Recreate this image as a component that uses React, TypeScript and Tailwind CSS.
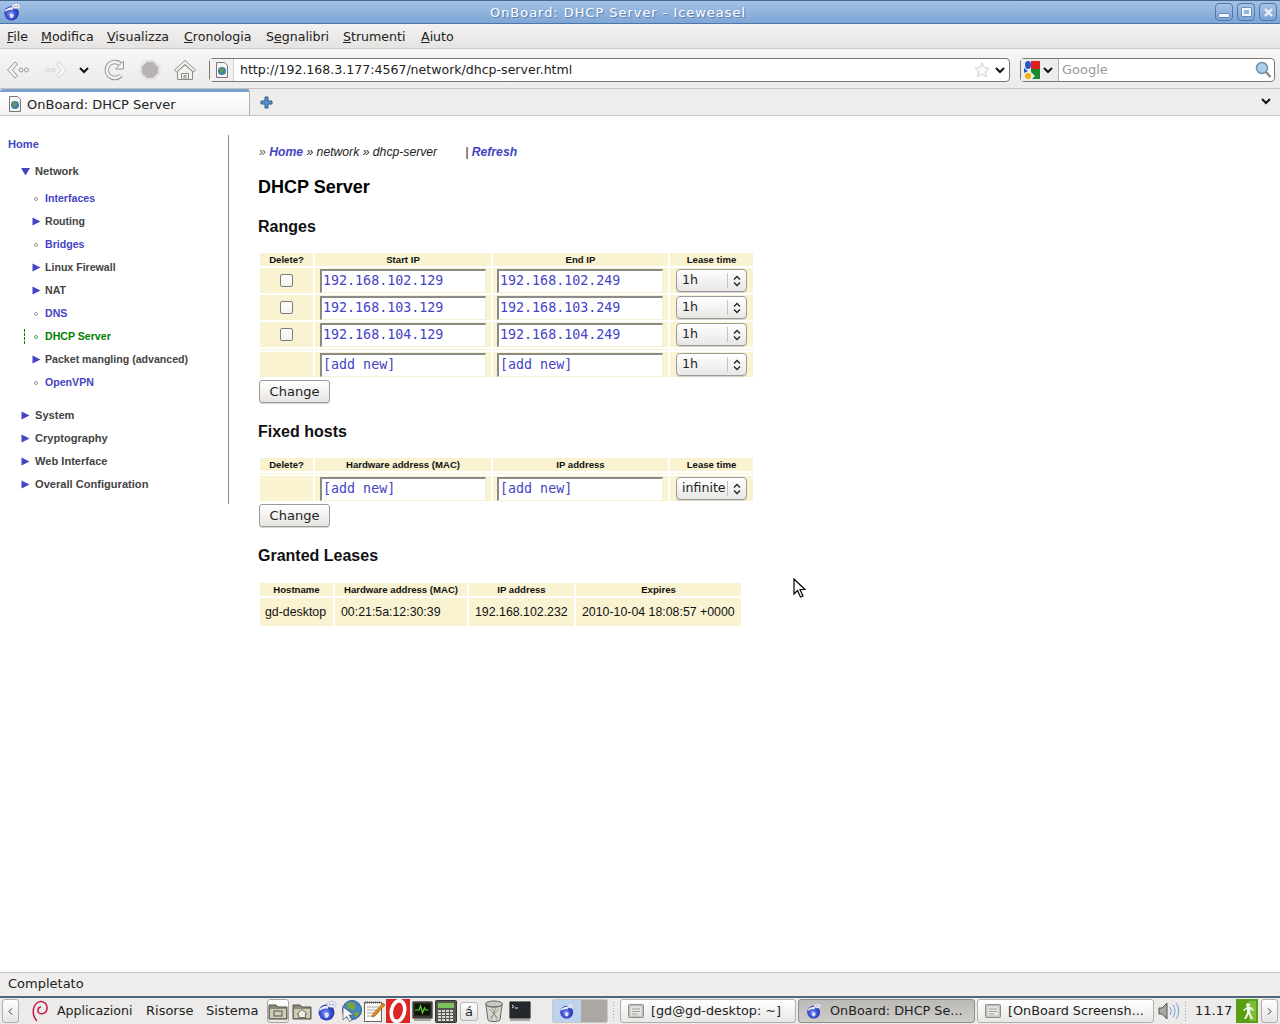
const Chevron = ({ className = "" }: { className?: string }) => (
  <svg className={className} width="12" height="8" viewBox="0 0 12 8" fill="none">
    <path d="M2 2l4 4 4-4" stroke="#111" strokeWidth="2" />
  </svg>
)

const Favicon = () => (
  <svg width="14" height="16" viewBox="0 0 14 16">
    <path d="M1.5.5h8l3 3v12h-11z" fill="#f4f4f2" stroke="#777" />
    <circle cx="7" cy="9" r="4" fill="#3f7fa8" />
    <path d="M5 7l3-1 1 2-2 3-2-2z" fill="#6d9a45" />
  </svg>
)

const Weasel = ({ size = 20 }: { size?: number }) => (
  <svg width={size} height={size} viewBox="0 0 20 20">
    <defs>
      <radialGradient id="weaselGlobe" cx="45%" cy="55%" r="60%">
        <stop offset="0" stopColor="#8f9ff0" />
        <stop offset="0.55" stopColor="#3a4fd4" />
        <stop offset="1" stopColor="#1c2a9a" />
      </radialGradient>
    </defs>
    <circle cx="9.5" cy="11.500" r="8" fill="url(#weaselGlobe)" />
    <path d="M2.500 8c3-3 6-4 9-3l-1 3c-3-1-5 0-8 2z" fill="#eef0fa" />
    <ellipse cx="14.500" cy="3.500" rx="4.500" ry="3" fill="#eef0fa" stroke="#8a94c8" strokeWidth="0.5" />
    <circle cx="13" cy="3.500" r="0.700" fill="#667" />
    <circle cx="16" cy="3.500" r="0.700" fill="#667" />
    <path d="M8 12c2-1 4 0 4 2s-2 3-3 3-2-3-1-5z" fill="#dfe3fa" />
  </svg>
)

const Triangle = ({ down = false }: { down?: boolean }) => (
  <svg width="9" height="9" viewBox="0 0 9 9" className="shrink-0">
    <path d={down ? "M0 1h9L4.5 8.5z" : "M0.5 0.5L8.5 4.5 0.5 8.5z"} fill="#4444c4" />
  </svg>
)

const Bullet = ({ green = false }: { green?: boolean }) => (
  <span className={`block h-[4px] w-[4px] shrink-0 rounded-full border ${green ? "border-[#5aa85a]" : "border-[#9a9a9a]"}`} />
)

const subItems: { label: string; kind: "link" | "folder" | "active" }[] = [
  { label: "Interfaces", kind: "link" },
  { label: "Routing", kind: "folder" },
  { label: "Bridges", kind: "link" },
  { label: "Linux Firewall", kind: "folder" },
  { label: "NAT", kind: "folder" },
  { label: "DNS", kind: "link" },
  { label: "DHCP Server", kind: "active" },
  { label: "Packet mangling (advanced)", kind: "folder" },
  { label: "OpenVPN", kind: "link" },
]

const Sidebar = () => (
  <nav className="mt-[19px] h-[369px] w-[229px] shrink-0 border-r border-[#8a8a8a] text-[11.1px] font-bold text-[#444444]">
    <div className="flex h-[19px] items-center pl-[8px] text-[#4444c4]">Home</div>
    <div className="mt-[6px] flex h-[23px] items-center gap-[5px] pl-[21px]">
      <Triangle down />
      <span>Network</span>
    </div>
    <div className="mt-[4px] text-[10.6px]">
      {subItems.map((item) => (
        <div key={item.label} className="relative flex h-[23px] items-center">
          {item.kind === "active" && <span className="absolute left-[24px] top-[4px] h-[15px] border-l border-dashed border-[#008000]" />}
          {item.kind === "folder" ? (
            <span className="ml-[32px] mr-[4px] flex w-[9px]"><Triangle /></span>
          ) : (
            <span className="ml-[34px] mr-[7px] flex w-[4px]"><Bullet green={item.kind === "active"} /></span>
          )}
          <span className={item.kind === "link" ? "text-[#4444c4]" : item.kind === "active" ? "text-[#008000]" : ""}>{item.label}</span>
        </div>
      ))}
    </div>
    <div className="mt-[10px]">
      {["System", "Cryptography", "Web Interface", "Overall Configuration"].map((label) => (
        <div key={label} className="flex h-[23px] items-center gap-[5px] pl-[21px]">
          <Triangle />
          <span>{label}</span>
        </div>
      ))}
    </div>
  </nav>
)

const TextBox = ({ value }: { value: string }) => (
  <input
    readOnly
    value={value}
    className="block h-[24px] w-[166px] border-2 border-b border-r border-[#8a8a86] border-b-[#f6f0d2] border-r-[#f6f0d2] bg-white pb-[2px] pl-[1px] font-['DejaVu_Sans_Mono',monospace] text-[13.33px] text-[#4444c4] outline-none"
  />
)

const Select = ({ value }: { value: string }) => (
  <div className="flex h-[23px] w-[71px] items-center rounded-[4px] border border-[#9a9a96] bg-gradient-to-b from-white to-[#e8e7e5] font-['DejaVu_Sans',sans-serif] text-[12.6px] text-[#222222] shadow-[0_1px_0_#d4d2c8]">
    <span className="w-[50px] shrink-0 whitespace-nowrap pl-[5px]">{value}</span>
    <span className="flex h-[15px] w-[19px] items-center justify-center border-l border-[#c4c3c0]">
      <svg width="8" height="12" viewBox="0 0 8 12" fill="none">
        <path d="M1 4.5l3-3 3 3M1 7.5l3 3 3-3" stroke="#222" strokeWidth="1.3" />
      </svg>
    </span>
  </div>
)

const CheckBox = () => (
  <span className="mx-auto block h-[13px] w-[13px] rounded-[2px] border border-[#7d7d7a] bg-gradient-to-b from-white to-[#f2f2f0]" />
)

const ChangeButton = () => (
  <button className="ml-[1px] mt-[1px] block h-[23px] w-[71px] rounded-[3px] border border-[#9a9a96] bg-gradient-to-b from-white to-[#e6e5e2] font-['DejaVu_Sans',sans-serif] text-[13px] text-[#222222] shadow-[0_1px_0_#d8d8d4]">
    Change
  </button>
)

const tableClass = "table-fixed border-separate border-spacing-[2px] bg-white"
const thClass = "h-[13px] bg-[#faf3d2] p-0 text-center text-[9.6px] font-bold leading-[13px] text-[#111111]"
const tdClass = "h-[25px] bg-[#faf3d2] p-0 align-top"
const startCell = "h-[25px] bg-[#faf3d2] p-0 pl-[5px] pt-[1px] align-top"
const endCell = "h-[25px] bg-[#faf3d2] p-0 pl-[4px] pt-[1px] align-top"
const selectCell = "h-[25px] bg-[#faf3d2] p-0 pl-[6px] pt-[1px] align-top"

const Spacer = () => (
  <tr>
    {[0, 1, 2, 3].map((i) => (
      <td key={i} className="h-[1px] bg-[#faf3d2] p-0 text-[0px] leading-[0]"></td>
    ))}
  </tr>
)

const ranges = [
  ["192.168.102.129", "192.168.102.249"],
  ["192.168.103.129", "192.168.103.249"],
  ["192.168.104.129", "192.168.104.249"],
]

const Cols = () => (
  <colgroup>
    <col className="w-[53px]" />
    <col className="w-[176px]" />
    <col className="w-[175px]" />
    <col className="w-[83px]" />
  </colgroup>
)

const RangesTable = () => (
  <table className={`${tableClass} mt-[15px] w-[497px]`}>
    <Cols />
    <tbody>
      <tr>
        <th className={thClass}>Delete?</th>
        <th className={thClass}>Start IP</th>
        <th className={thClass}>End IP</th>
        <th className={thClass}>Lease time</th>
      </tr>
      {ranges.map((row) => (
        <tr key={row[0]}>
          <td className={`${tdClass} pt-[6px]`}><CheckBox /></td>
          <td className={startCell}><TextBox value={row[0]} /></td>
          <td className={endCell}><TextBox value={row[1]} /></td>
          <td className={selectCell}><Select value="1h" /></td>
        </tr>
      ))}
      <Spacer />
      <tr>
        <td className={tdClass}></td>
        <td className={startCell}><TextBox value="[add new]" /></td>
        <td className={endCell}><TextBox value="[add new]" /></td>
        <td className={selectCell}><Select value="1h" /></td>
      </tr>
    </tbody>
  </table>
)

const FixedTable = () => (
  <table className={`${tableClass} mt-[15px] w-[497px]`}>
    <Cols />
    <tbody>
      <tr>
        <th className={thClass}>Delete?</th>
        <th className={thClass}>Hardware address (MAC)</th>
        <th className={thClass}>IP address</th>
        <th className={thClass}>Lease time</th>
      </tr>
      <Spacer />
      <tr>
        <td className={tdClass}></td>
        <td className={startCell}><TextBox value="[add new]" /></td>
        <td className={endCell}><TextBox value="[add new]" /></td>
        <td className={selectCell}><Select value="infinite" /></td>
      </tr>
    </tbody>
  </table>
)

const leaseCell = "h-[28px] whitespace-nowrap bg-[#faf3d2] p-0 pl-[6px] pt-[1px] text-[12.35px] text-[#111111]"

const LeasesTable = () => (
  <table className={`${tableClass} mt-[16px] w-[485px]`}>
    <colgroup>
      <col className="w-[73px]" />
      <col className="w-[132px]" />
      <col className="w-[105px]" />
      <col className="w-[165px]" />
    </colgroup>
    <tbody>
      <tr>
        <th className={thClass}>Hostname</th>
        <th className={thClass}>Hardware address (MAC)</th>
        <th className={thClass}>IP address</th>
        <th className={thClass}>Expires</th>
      </tr>
      <tr>
        <td className={leaseCell}><span className="-ml-[1px]">gd-desktop</span></td>
        <td className={leaseCell}>00:21:5a:12:30:39</td>
        <td className={leaseCell}>192.168.102.232</td>
        <td className={leaseCell}>2010-10-04 18:08:57 +0000</td>
      </tr>
    </tbody>
  </table>
)

const SectionTitle = ({ children }: { children: string }) => (
  <h2 className="mt-[18px] flex h-[20px] items-center pt-[1px] text-[16px] font-bold text-[#111111]">{children}</h2>
)

const PageBody = () => (
  <main className="ml-[29px] flex-1">
    <div className="mt-[28px] flex h-[16px] items-center whitespace-pre pl-[1px] text-[12.2px] italic text-[#222222]">
      <span className="text-[#555555]">» </span>
      <span className="font-bold text-[#4444c4]">Home</span>
      <span> » network » dhcp-server</span>
      <span className="ml-[28px]">| </span>
      <span className="font-bold text-[#4444c4]">Refresh</span>
    </div>
    <h1 className="mt-[17px] flex h-[20px] items-center text-[18px] font-bold text-black">DHCP Server</h1>
    <h2 className="mt-[19px] flex h-[20px] items-center pt-[1px] text-[16px] font-bold text-[#111111]">Ranges</h2>
    <RangesTable />
    <ChangeButton />
    <SectionTitle>Fixed hosts</SectionTitle>
    <FixedTable />
    <ChangeButton />
    <SectionTitle>Granted Leases</SectionTitle>
    <LeasesTable />
  </main>
)

const WindowButton = ({ children }: { children: React.ReactNode }) => (
  <span className="flex h-[18px] w-[18px] items-center justify-center rounded-[4px] border border-[#4f78ad] bg-gradient-to-b from-[#a9c4e6] to-[#7da3d3]">
    {children}
  </span>
)

const TitleBar = () => (
  <header className="relative flex h-[24px] items-center border-t border-b border-t-[#47678f] border-b-[#4f76a8] bg-gradient-to-b from-[#a3c1e4] to-[#7ea6d6]">
    <span className="ml-[3px] flex"><Weasel size={18} /></span>
    <span className="flex-1 pt-[2px] text-center text-[13px] tracking-[0.95px] text-white [text-shadow:1px_1px_0_#5b7fae]">OnBoard: DHCP Server - Iceweasel</span>
    <div className="mr-[3px] flex gap-[4px]">
      <WindowButton><span className="mt-[7px] block h-[3px] w-[10px] bg-[#eef3fa] shadow-[0_0_0_0.5px_#456a9c]" /></WindowButton>
      <WindowButton><span className="block h-[8px] w-[9px] border-2 border-[#eef3fa] shadow-[0_0_0_0.5px_#456a9c]" /></WindowButton>
      <WindowButton>
        <svg width="11" height="11" viewBox="0 0 11 11"><path d="M2 2l7 7M9 2l-7 7" stroke="#eef3fa" strokeWidth="2.4" /></svg>
      </WindowButton>
    </div>
  </header>
)

const menus: { pre: string; key: string; rest: string; w: string }[] = [
  { pre: "", key: "F", rest: "ile", w: "w-[20px]" },
  { pre: "", key: "M", rest: "odifica", w: "w-[52px]" },
  { pre: "", key: "V", rest: "isualizza", w: "w-[63px]" },
  { pre: "", key: "C", rest: "ronologia", w: "w-[68px]" },
  { pre: "S", key: "e", rest: "gnalibri", w: "w-[63px]" },
  { pre: "", key: "S", rest: "trumenti", w: "w-[64px]" },
  { pre: "", key: "A", rest: "iuto", w: "w-[33px]" },
]

const MenuBar = () => (
  <div className="flex h-[25px] items-center gap-[14px] border-b border-[#c9c8c6] bg-gradient-to-b from-[#f3f2f0] to-[#e5e4e2] pl-[7px] pt-[2px] text-[12.6px] text-[#222222]">
    {menus.map((m) => (
      <span key={m.rest} className={`${m.w} whitespace-nowrap`}>{m.pre}<span className="underline">{m.key}</span>{m.rest}</span>
    ))}
  </div>
)

const NavToolbar = () => (
  <div className="flex h-[39px] items-center bg-gradient-to-b from-[#f6f6f4] to-[#ecebe9] pl-[6px] pt-[2px]">
    <svg width="24" height="24" viewBox="0 0 24 24" fill="#f2f1ef" stroke="#999896">
      <path d="M1.5 12L9 4l2.5 2L6.5 12l5 6L9 20z" />
      <circle cx="15" cy="12" r="2" fill="none" />
      <circle cx="20.5" cy="12" r="2" fill="none" />
    </svg>
    <svg className="ml-[14px]" width="24" height="24" viewBox="0 0 24 24" fill="#f7f6f4" stroke="#d4d3d1">
      <path d="M22.5 12L15 4l-2.5 2 5 6-5 6 2.5 2z" />
      <circle cx="9" cy="12" r="2" fill="none" />
      <circle cx="3.5" cy="12" r="2" fill="none" />
    </svg>
    <Chevron className="ml-[10px]" />
    <svg className="ml-[13px]" width="24" height="24" viewBox="0 0 24 24" fill="none">
      <path d="M18 17a8 8 0 1 1 0-10" stroke="#999896" strokeWidth="4.4" />
      <path d="M18 17a8 8 0 1 1 0-10" stroke="#f4f3f1" strokeWidth="2.6" />
      <path d="M20.5 3v8h-8z" fill="#f4f3f1" stroke="#999896" />
    </svg>
    <svg className="ml-[11px]" width="24" height="24" viewBox="0 0 24 24">
      <path d="M8 1.500h8l6.500 6.500v8L16 22.500H8L1.500 16V8z" fill="#e4e3e1" />
      <path d="M9 4h6l5 5v6l-5 5H9l-5-5V9z" fill="#b8b2b2" />
    </svg>
    <svg className="ml-[11px]" width="24" height="24" viewBox="0 0 24 24" fill="#f4f3f1" stroke="#8c8b88">
      <path d="M12 2.500L1.500 12l2 2L12 6.500 20.500 14l2-2z" />
      <path d="M4.500 13.500v8h15v-8L12 7z" />
      <path d="M8.500 21.500v-6h7v6M11 21.500v-4h2v4" fill="none" />
    </svg>
    <div className="ml-[12px] flex h-[24px] w-[801px] items-center rounded-[4px] border border-[#777774] bg-white">
      <span className="flex h-full w-[24px] items-center justify-center border-r border-[#d0cfcc] bg-[#f2f1ef]"><Favicon /></span>
      <span className="ml-[6px] flex-1 pt-[2px] text-[12.55px] text-[#222222]">http://192.168.3.177:4567/network/dhcp-server.html</span>
      <svg width="16" height="16" viewBox="0 0 16 16" fill="#fafafa" stroke="#d0d0ce">
        <path d="M8 .8l2.200 4.800 5 .6-3.700 3.500 1 5.200L8 12.300l-4.500 2.600 1-5.200L.8 6.200l5-.6z" />
      </svg>
      <Chevron className="ml-[4px] mr-[3px]" />
    </div>
    <div className="ml-[10px] flex h-[24px] w-[255px] items-center rounded-[4px] border border-[#777774] bg-white">
      <span className="flex h-full w-[38px] items-center border-r border-[#b4b3b0] bg-[#eeedeb] pl-[3px]">
        <svg width="17" height="18" viewBox="0 0 17 18">
          <rect x="7" y="0" width="9" height="8" fill="#e02020" />
          <ellipse cx="4" cy="4" rx="3" ry="4" fill="#2255cc" />
          <path d="M0 7l4 3-4 2z" fill="#2255cc" />
          <path d="M7 8h9v10H8l3-3-4-4z" fill="#1a8a2e" />
          <circle cx="4" cy="15" r="3" fill="#efb010" />
        </svg>
        <Chevron className="ml-[1px]" />
      </span>
      <span className="ml-[3px] flex-1 text-[13px] text-[#9a9a98]">Google</span>
      <svg className="mr-[2px]" width="17" height="18" viewBox="0 0 17 18">
        <circle cx="7" cy="7" r="5.500" fill="#a9cdee" stroke="#7a8ea4" strokeWidth="1.500" />
        <path d="M11 11l4.500 5" stroke="#8a8a88" strokeWidth="2.500" />
      </svg>
    </div>
  </div>
)

const TabBar = () => (
  <div className="flex h-[28px] items-end border-t border-b border-[#c4c3c1] bg-[#eeedeb]">
    <div className="flex h-[26px] w-[250px] items-center rounded-t-[3px] border-r border-t-[3px] border-r-[#b4b3b1] border-t-[#7aa0d0] bg-gradient-to-b from-white to-[#f4f3f1] pl-[8px] text-[13px] text-[#222222]">
      <Favicon />
      <span className="ml-[5px] pt-[2px]">OnBoard: DHCP Server</span>
    </div>
    <svg className="mb-[6px] ml-[10px]" width="13" height="13" viewBox="0 0 13 13">
      <path d="M5 1h3v4h4v3H8v4H5V8H1V5h4z" fill="#5d8fc8" stroke="#2f5f98" />
    </svg>
    <Chevron className="mb-[10px] ml-auto mr-[8px]" />
  </div>
)

const StatusBar = () => (
  <div className="flex h-[24px] items-center border-t border-[#c4c3c1] bg-[#efeeec] pb-[1px] pl-[8px] text-[13px] text-[#222222]">Completato</div>
)

const PanelArrow = ({ dir }: { dir: "l" | "r" }) => (
  <span className="flex h-[24px] w-[17px] items-center justify-center rounded-[3px] border border-[#b0afac] bg-gradient-to-b from-white to-[#e6e5e3]">
    <svg width="5" height="7" viewBox="0 0 5 7" fill="none">
      <path d={dir === "l" ? "M4 .5l-3 3 3 3" : "M1 .5l3 3-3 3"} stroke="#333" />
    </svg>
  </span>
)

const FolderIcon = ({ glyph }: { glyph: React.ReactNode }) => (
  <svg width="20" height="20" viewBox="0 0 20 20">
    <path d="M1 4h7l2 2h9v12H1z" fill="#8c8a70" stroke="#55544a" />
    <rect x="2" y="8" width="16" height="9" fill="#cfcdb8" />
    {glyph}
  </svg>
)

const LauncherIcons = () => (
  <>
    <span className="flex h-[24px] w-[22px] items-center justify-center rounded-[3px] border border-[#a8a7a4] bg-gradient-to-b from-white to-[#e8e7e5]">
      <FolderIcon glyph={<rect x="6" y="10" width="8" height="5" fill="none" stroke="#55544a" />} />
    </span>
    <span className="ml-[3px] flex">
      <FolderIcon glyph={<path d="M10 8.500L5 13h1.500v3.500h7V13H15z" fill="#eeeee4" stroke="#55544a" strokeWidth="0.8" />} />
    </span>
    <span className="ml-[5px] flex"><Weasel size={20} /></span>
    <svg className="ml-[3px]" width="22" height="22" viewBox="0 0 22 22">
      <circle cx="12" cy="10" r="9.500" fill="#3f86c4" stroke="#2b5f92" />
      <path d="M7 3l6-1 3 4-3 5-3-2-3-1zM14 13l4-2 1 3-3 4z" fill="#7aa23c" />
      <path d="M3 7l0 13 3.500-3.500 3 5 2.500-1.500-3-5h5z" fill="#f6f6f6" stroke="#555" strokeWidth="0.7" />
    </svg>
    <svg className="ml-[1px]" width="22" height="22" viewBox="0 0 22 22">
      <rect x="1.500" y="2.500" width="17" height="19" fill="#fbfbf5" stroke="#66655f" />
      <path d="M2 2.500h16" stroke="#555" strokeWidth="2" strokeDasharray="1 1" />
      <path d="M4 7h12M4 10h10M4 13h8M4 16h6" stroke="#a9a89e" />
      <path d="M20 3l2 2-10 11-3 1 1-3z" fill="#e88a1a" stroke="#8a4a10" strokeWidth="0.6" />
    </svg>
    <svg className="ml-[1px]" width="24" height="24" viewBox="0 0 24 24">
      <rect width="24" height="24" fill="#dc2626" />
      <ellipse cx="12" cy="12" rx="6.500" ry="10.500" transform="rotate(12 12 12)" fill="none" stroke="#fff" strokeWidth="3.600" />
    </svg>
    <svg className="ml-[2px]" width="21" height="20" viewBox="0 0 21 20">
      <rect x="0.500" y="0.500" width="20" height="17" rx="1" fill="#3c3c38" stroke="#77766f" />
      <rect x="2.500" y="2.500" width="16" height="12" fill="#0d1408" />
      <path d="M3 9h4l1.500-4 2 7 2-5 1 2h3" fill="none" stroke="#5cd23c" strokeWidth="1.200" />
      <rect x="2" y="18" width="17" height="2" fill="#a9a8a4" />
    </svg>
    <svg className="ml-[2px]" width="22" height="23" viewBox="0 0 22 23">
      <rect x="0.500" y="0.500" width="21" height="22" rx="1" fill="#55554f" stroke="#333" />
      <rect x="3" y="3" width="16" height="5" fill="#7cc060" />
      <g fill="#d8d8d0">
        {[10, 13, 16, 19].flatMap((y) => [3, 7, 11, 15].map((x) => <rect key={`${x}-${y}`} x={x} y={y} width="3" height="2" />))}
      </g>
    </svg>
    <span className="ml-[3px] flex h-[19px] w-[18px] items-center justify-center rounded-[3px] border border-[#b8b7b4] bg-gradient-to-b from-white to-[#e4e3e1] text-[13px] leading-none text-[#222222]">á</span>
    <svg className="ml-[6px]" width="20" height="23" viewBox="0 0 20 23" fill="none">
      <ellipse cx="10" cy="4" rx="8.500" ry="3" fill="#c9c8c2" stroke="#66655f" />
      <path d="M2 5l2 15c1 2 11 2 12 0l2-15c-3 3-13 3-16 0z" fill="#d8d7d0" stroke="#66655f" />
      <path d="M5 9l9 9M15 9l-9 9M8 8l5 12M12 8l-5 12" stroke="#8c8b84" strokeWidth="0.8" />
    </svg>
    <svg className="ml-[5px]" width="22" height="20" viewBox="0 0 22 20">
      <rect x="0.500" y="0.500" width="21" height="17" rx="1" fill="#24282c" stroke="#77766f" />
      <path d="M3 4l2 1.500L3 7" fill="none" stroke="#eee" />
      <path d="M6 7h3" stroke="#eee" />
      <rect x="1" y="18" width="20" height="2" fill="#a9a8a4" />
    </svg>
  </>
)

const TaskIcon = () => (
  <svg width="16" height="16" viewBox="0 0 16 16">
    <rect x="0.500" y="1.500" width="15" height="13" rx="1" fill="#c4c3bf" stroke="#8e8d89" />
    <rect x="2.500" y="3.500" width="11" height="9" fill="#e6e6e2" />
    <path d="M4 6h8M4 8.500h8M4 11h5" stroke="#a09f9b" />
  </svg>
)

const Handle = () => (
  <span className="block h-[20px] w-[3px] bg-[radial-gradient(#a0a09c_35%,transparent_40%)] bg-[length:3px_3px]" />
)

const tasks = [
  { label: "[gd@gd-desktop: ~]", w: "w-[176px]", ml: "ml-[5px]", gap: "ml-[7px]", active: false },
  { label: "OnBoard: DHCP Se...", w: "w-[177px]", ml: "ml-[2px]", gap: "ml-[8px]", active: true },
  { label: "[OnBoard Screensh...", w: "w-[177px]", ml: "ml-[2px]", gap: "ml-[7px]", active: false },
]

const Panel = () => (
  <footer className="flex h-[28px] items-center border-t-2 border-[#50647e] bg-[#ecebe9] pl-[2px] text-[13px] text-[#222222]">
    <PanelArrow dir="l" />
    <svg className="ml-[12px]" width="18" height="24" viewBox="0 0 18 24" fill="none">
      <path d="M6 22C1 17 1 8 6 4c4-3 10-1 10 5 0 5-5 7-8 5-2-2-1-6 2-6" stroke="#c8174c" strokeWidth="1.500" />
    </svg>
    <span className="ml-[8px] w-[89px] text-[12.6px]">Applicazioni</span>
    <span className="w-[60px]">Risorse</span>
    <span className="w-[61px]">Sistema</span>
    <LauncherIcons />
    <div className="ml-[21px] flex h-[24px] w-[56px] overflow-hidden rounded-[2px] border border-[#c9c8c6]">
      <span className="flex w-[28px] items-center justify-center bg-[#bcd2ee]"><Weasel size={16} /></span>
      <span className="flex-1 bg-[#aba8a3]" />
    </div>
    <span className="ml-[4px] block"><Handle /></span>
    {tasks.map((t) => (
      <div
        key={t.label}
        className={`${t.ml} ${t.w} flex h-[24px] items-center rounded-[3px] border pl-[7px] ${t.active ? "border-[#8e8d8a] bg-gradient-to-b from-[#bcbab6] to-[#cfcdc9]" : "border-[#b0afac] bg-gradient-to-b from-white to-[#e8e7e5]"}`}
      >
        {t.active ? <Weasel size={16} /> : <TaskIcon />}
        <span className={`${t.gap} whitespace-nowrap text-[12.8px]`}>{t.label}</span>
      </div>
    ))}
    <svg className="ml-[4px]" width="21" height="20" viewBox="0 0 21 20" fill="none">
      <path d="M1 7h3l5-5v16l-5-5H1z" fill="#a9a8a5" stroke="#55544f" />
      <path d="M12 6c1.500 2 1.500 6 0 8M15 4c2.500 3 2.500 9 0 12M18 2c3.500 4 3.500 12 0 16" stroke="#6f9ad8" />
    </svg>
    <span className="ml-[5px] block"><Handle /></span>
    <span className="ml-[8px] w-[41px]">11.17</span>
    <svg width="22" height="24" viewBox="0 0 22 24">
      <rect width="22" height="24" fill="#5a9e14" />
      <rect x="13" y="2" width="7" height="20" fill="#7fbc3a" />
      <circle cx="12" cy="6" r="2" fill="#f4f8ec" />
      <path d="M11 8l-4 3 1 1 3-2 0 4-3 6h2l3-5 2 5h2l-3-7 1-3 2 2 1-1-3-3z" fill="#f4f8ec" />
    </svg>
    <span className="ml-[3px] block"><PanelArrow dir="r" /></span>
  </footer>
)

const MouseCursor = () => (
  <svg className="absolute left-[793px] top-[578px]" width="14" height="21" viewBox="0 0 14 21">
    <path d="M1 1v15l3.500-3.500 3 6.500 2.500-1-3-6.500h5z" fill="#fff" stroke="#000" strokeWidth="1.200" />
  </svg>
)

export default function App() {
  return (
    <div className="relative flex h-[1024px] w-[1280px] flex-col overflow-hidden bg-white font-['DejaVu_Sans',sans-serif]">
      <TitleBar />
      <MenuBar />
      <NavToolbar />
      <TabBar />
      <div className="flex min-h-0 flex-1 bg-white font-['Liberation_Sans',Arial,sans-serif]">
        <Sidebar />
        <PageBody />
      </div>
      <StatusBar />
      <Panel />
      <MouseCursor />
    </div>
  )
}
